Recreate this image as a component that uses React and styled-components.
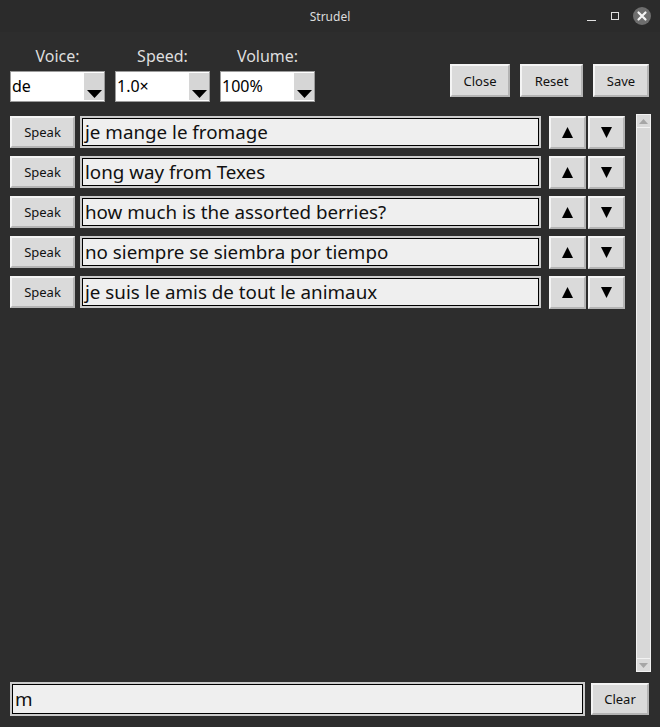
import React from "react";
import styled, { createGlobalStyle } from "styled-components";

const Global = createGlobalStyle`
  html, body { margin: 0; padding: 0; background: #2d2d2d; }
  body { font-family: "Noto Sans", "Open Sans", sans-serif; }
  * { box-sizing: border-box; }
`;

const Window = styled.div`
  width: 660px;
  height: 727px;
  background: #2d2d2d;
  display: flex;
  flex-direction: column;
  overflow: hidden;
`;

const TitleBar = styled.div`
  height: 32px;
  flex: none;
  position: relative;
  display: flex;
  align-items: center;
  justify-content: center;
  color: #dcdcdc;
  font-size: 12px;
  background: #2b2b2b;
`;

const WinControls = styled.div`
  position: absolute;
  right: 8px;
  top: 0;
  height: 32px;
  display: flex;
  align-items: center;
  gap: 10px;
`;

const Toolbar = styled.div`
  display: flex;
  align-items: flex-end;
  padding: 14px 11px 0 10px;
`;

const Groups = styled.div`
  display: flex;
  gap: 10px;
`;

const Group = styled.div`
  display: flex;
  flex-direction: column;
  align-items: center;
  gap: 5px;
`;

const Label = styled.div`
  color: #dedede;
  font-size: 16px;
  line-height: 20px;
  height: 20px;
`;

const Combo = styled.div`
  width: 95px;
  height: 31px;
  background: #fff;
  border: 1px solid #9c9c9c;
  display: flex;
  align-items: center;
  padding-left: 1px;
  font-size: 16px;
  color: #000;
`;

const ComboText = styled.span`
  flex: 1;
  line-height: 29px;
`;

const ComboArrow = styled.div`
  width: 20px;
  align-self: stretch;
  margin: 1px 0;
  background: #d6d6d6;
  display: flex;
  align-items: flex-end;
  justify-content: center;
  padding-bottom: 2px;
`;

const TopButtons = styled.div`
  margin-left: auto;
  margin-bottom: 5px;
  display: flex;
  gap: 10px;
`;

const Btn = styled.button`
  height: ${(p) => p.$h || 33}px;
  width: ${(p) => p.$w}px;
  margin-left: ${(p) => p.$ml || 0}px;
  background: #dadada;
  border: 2px solid;
  border-color: #f4f4f4 #b4b4b4 #b4b4b4 #f4f4f4;
  font-family: "Noto Sans", "Open Sans", sans-serif;
  font-size: 13px;
  color: #111;
  padding: 0;
  display: flex;
  align-items: center;
  justify-content: center;
  flex: none;
`;

const ListArea = styled.div`
  flex: 1;
  display: flex;
  margin-top: 12px;
  padding: 0 9px 0 10px;
  min-height: 0;
`;

const Rows = styled.div`
  flex: 1;
  display: flex;
  flex-direction: column;
  gap: 8px;
  padding-top: 2px;
`;

const Row = styled.div`
  display: flex;
  align-items: center;
  height: 32px;
`;

const Entry = styled.div`
  flex: 1;
  height: ${(p) => p.$h || 32}px;
  margin: ${(p) => (p.$inRow ? "0 8px 0 5px" : "0")};
  background: #efefef;
  border: 2px solid #cbcbcb;
  box-shadow: inset 0 0 0 1px #000;
  display: flex;
  align-items: center;
  padding-left: 3px;
  font-size: 18.8px;
  color: #111;
  white-space: nowrap;
`;

const Scrollbar = styled.div`
  width: 15px;
  margin-left: 11px;
  border: 1px solid #f2f2f2;
  background: #d8d8d8;
  display: flex;
  flex-direction: column;
  justify-content: space-between;
`;

const ScrollBtn = styled.div`
  height: 13px;
  background: #dadada;
  border-${(p) => (p.$down ? "top" : "bottom")}: 1px solid #f2f2f2;
  display: flex;
  align-items: center;
  justify-content: center;
`;

const BottomRow = styled.div`
  display: flex;
  align-items: center;
  gap: 6px;
  padding: 10px 11px 11px 10px;
`;

const DownTri = ({ w = 14, h = 8, color = "#000" }) => (
  <svg width={w} height={h} viewBox={`0 0 ${w} ${h}`}>
    <polygon points={`0,0 ${w},0 ${w / 2},${h}`} fill={color} />
  </svg>
);
const UpTri = ({ w = 14, h = 8, color = "#000" }) => (
  <svg width={w} height={h} viewBox={`0 0 ${w} ${h}`}>
    <polygon points={`0,${h} ${w},${h} ${w / 2},0`} fill={color} />
  </svg>
);

const phrases = [
  "je mange le fromage",
  "long way from Texes",
  "how much is the assorted berries?",
  "no siempre se siembra por tiempo",
  "je suis le amis de tout le animaux",
];

const combos = [
  ["Voice:", "de"],
  ["Speed:", "1.0×"],
  ["Volume:", "100%"],
];

export default function App() {
  return (
    <Window>
      <Global />
      <TitleBar>
        Strudel
        <WinControls>
          <svg width="12" height="12" viewBox="0 0 12 12">
            <line x1="1" y1="10.5" x2="10" y2="10.5" stroke="#e0e0e0" strokeWidth="1" />
          </svg>
          <svg width="14" height="12" viewBox="0 0 14 12">
            <rect x="3.5" y="2.5" width="7" height="7" fill="none" stroke="#e0e0e0" strokeWidth="1" />
          </svg>
          <svg width="20" height="20" viewBox="0 0 20 20">
            <circle cx="10" cy="10" r="9" fill="#6e6e6e" />
            <path d="M6.5 6.5 L13.5 13.5 M13.5 6.5 L6.5 13.5" stroke="#f5f5f5" strokeWidth="2.2" strokeLinecap="round" />
          </svg>
        </WinControls>
      </TitleBar>

      <Toolbar>
        <Groups>
          {combos.map(([label, value]) => (
            <Group key={label}>
              <Label>{label}</Label>
              <Combo>
                <ComboText>{value}</ComboText>
                <ComboArrow>
                  <DownTri w={15} h={8} />
                </ComboArrow>
              </Combo>
            </Group>
          ))}
        </Groups>
        <TopButtons>
          <Btn $w={60}>Close</Btn>
          <Btn $w={63}>Reset</Btn>
          <Btn $w={56}>Save</Btn>
        </TopButtons>
      </Toolbar>

      <ListArea>
        <Rows>
          {phrases.map((p) => (
            <Row key={p}>
              <Btn $w={65} $h={32}>Speak</Btn>
              <Entry $inRow>{p}</Entry>
              <Btn $w={37} $h={33}>
                <UpTri w={11} h={11} />
              </Btn>
              <Btn $w={37} $h={33} $ml={2}>
                <DownTri w={11} h={11} />
              </Btn>
            </Row>
          ))}
        </Rows>
        <Scrollbar>
          <ScrollBtn>
            <UpTri w={9} h={5} color="#a6a6a6" />
          </ScrollBtn>
          <ScrollBtn $down>
            <DownTri w={9} h={5} color="#a6a6a6" />
          </ScrollBtn>
        </Scrollbar>
      </ListArea>

      <BottomRow>
        <Entry $h={34}>m</Entry>
        <Btn $w={58} $h={32}>Clear</Btn>
      </BottomRow>
    </Window>
  );
}
